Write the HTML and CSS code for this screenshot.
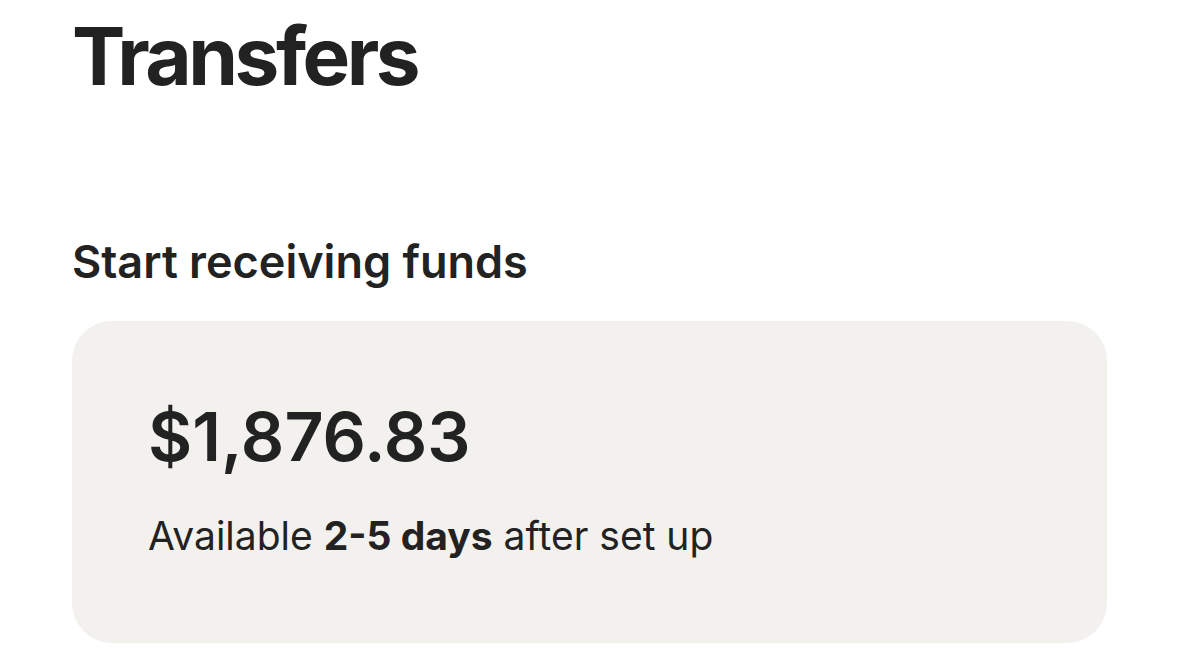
FILE: index.html
```html
<!DOCTYPE html>
<html lang="en">
	<head>
		<meta charset="utf-8" />
		<meta name="viewport" content="width=device-width, initial-scale=1" />
		<title>Transfers</title>
		<link rel="stylesheet" href="styles.css">
	</head>
	<body>
		<main class="page">
			<h1 class="page-title">Transfers</h1>

			<section class="funds">
				<h2 class="funds-heading">Start receiving funds</h2>

				<div class="funds-card">
					<p class="funds-amount">$1,876.83</p>
					<p class="funds-note">Available <strong>2-5 days</strong> after set up</p>
				</div>
			</section>
		</main>
	</body>
</html>
```

FILE: styles.css
```css
:root {
	--ink: #222222;
	--card-bg: #f2f1ed;
	font-family: Inter, "Liberation Sans", sans-serif;
}

* {
	margin: 0;
	box-sizing: border-box;
}
body {
	background: #fff;
	color: var(--ink);
}
.page {
	padding: 8px 72px 0 72px;
}
.page-title {
	font-size: 80px;
	font-weight: 700;
	line-height: 1.2;
	letter-spacing: -3.5px;
}
.funds {
	margin-top: 131px;
}
.funds-heading {
	font-size: 45px;
	font-weight: 600;
	line-height: 1.2;
}
.funds-card {
	background: var(--card-bg);
	border-radius: 40px;
	margin-top: 32px;
	width: 1035px;
	padding: 75px 76px 84px;
}
.funds-amount {
	font-size: 68px;
	font-weight: 600;
	line-height: 1.2;
}
.funds-note {
	font-size: 39px;
	line-height: 1.2;
	margin-top: 35px;
}
.funds-note strong {
	font-weight: 700;
}
```
